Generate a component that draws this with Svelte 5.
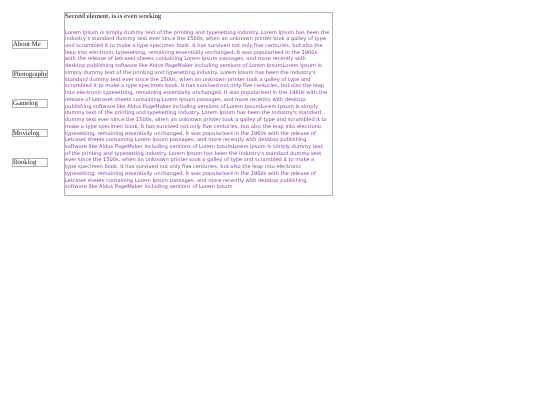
<script>
	const links = ['About Me', 'Photography', 'Gamelog', 'Movielog', 'Booklog'];

	const lines = [
		"Lorem Ipsum is simply dummy text of the printing and typesetting industry. Lorem Ipsum has been the",
		"industry's standard dummy text ever since the 1500s, when an unknown printer took a galley of type",
		"and scrambled it to make a type specimen book. It has survived not only five centuries, but also the",
		"leap into electronic typesetting, remaining essentially unchanged. It was popularised in the 1960s",
		"with the release of Letraset sheets containing Lorem Ipsum passages, and more recently with",
		"desktop publishing software like Aldus PageMaker including versions of Lorem IpsumLorem Ipsum is",
		"simply dummy text of the printing and typesetting industry. Lorem Ipsum has been the industry's",
		"standard dummy text ever since the 1500s, when an unknown printer took a galley of type and",
		"scrambled it to make a type specimen book. It has survived not only five centuries, but also the leap",
		"into electronic typesetting, remaining essentially unchanged. It was popularised in the 1960s with the",
		"release of Letraset sheets containing Lorem Ipsum passages, and more recently with desktop",
		"publishing software like Aldus PageMaker including versions of Lorem IpsumLorem Ipsum is simply",
		"dummy text of the printing and typesetting industry. Lorem Ipsum has been the industry's standard",
		"dummy text ever since the 1500s, when an unknown printer took a galley of type and scrambled it to",
		"make a type specimen book. It has survived not only five centuries, but also the leap into electronic",
		"typesetting, remaining essentially unchanged. It was popularised in the 1960s with the release of",
		"Letraset sheets containing Lorem Ipsum passages, and more recently with desktop publishing",
		"software like Aldus PageMaker including versions of Lorem IpsumLorem Ipsum is simply dummy text",
		"of the printing and typesetting industry. Lorem Ipsum has been the industry's standard dummy text",
		"ever since the 1500s, when an unknown printer took a galley of type and scrambled it to make a",
		"type specimen book. It has survived not only five centuries, but also the leap into electronic",
		"typesetting, remaining essentially unchanged. It was popularised in the 1960s with the release of",
		"Letraset sheets containing Lorem Ipsum passages, and more recently with desktop publishing",
		"software like Aldus PageMaker including versions of Lorem Ipsum"
	];
</script>

<div class="page">
	<nav class="sidebar">
		{#each links as link}
			<div class="link">{link}</div>
		{/each}
	</nav>

	<main class="content">
		<h2 class="title">Second element, is is even working</h2>
		<p class="body">
			{#each lines as line}
				<span class="line">{line}</span>
			{/each}
		</p>
	</main>
</div>

<style>
	:global(body) {
		margin: 0;
		background: #fff;
		text-rendering: geometricPrecision;
	}

	.page {
		display: flex;
		align-items: flex-start;
		padding: 12px 0 0 12px;
		will-change: transform;
	}

	.sidebar {
		display: flex;
		flex-direction: column;
		gap: 21px;
		width: 36px;
		margin: 28.3px 16px 0 0;
		flex-shrink: 0;
	}

	.link {
		box-sizing: border-box;
		height: 8.5px;
		border: 1px solid #b4b4b4;
		font-family: 'Liberation Serif', serif;
		font-size: 6.8px;
		line-height: 7.5px;
		color: #222;
		white-space: nowrap;
	}

	.content {
		box-sizing: border-box;
		width: 269px;
		height: 184px;
		border: 1px solid #b4b4b4;
		padding: 0;
	}

	.title {
		margin: 0;
		font-family: 'Liberation Serif', serif;
		font-size: 6.8px;
		font-weight: normal;
		line-height: 7.5px;
		color: #000;
	}

	.body {
		margin: 9px 0 0;
		font-family: 'DejaVu Sans', sans-serif;
		font-size: 5.13px;
		line-height: 6.74px;
		color: #8a3ca6;
	}

	.line {
		display: block;
		white-space: nowrap;
	}
</style>
